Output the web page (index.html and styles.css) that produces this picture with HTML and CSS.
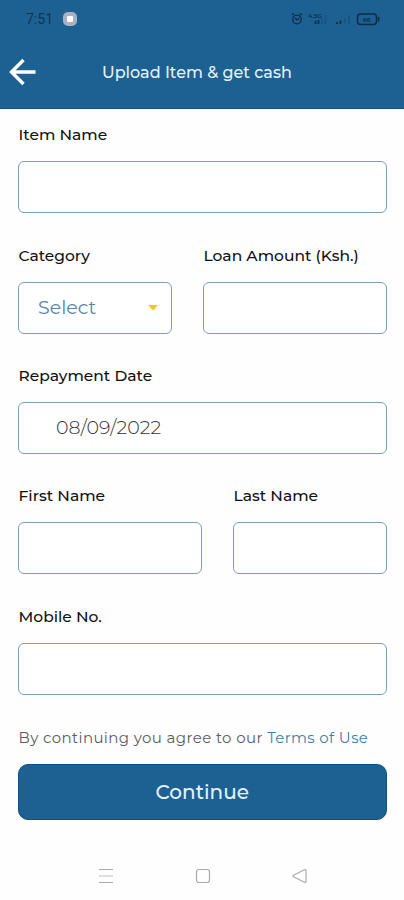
FILE: index.html
```html
<!DOCTYPE html>
<html lang="en">
<head>
    <meta charset="UTF-8">
    <meta name="viewport" content="width=device-width, initial-scale=1.0">
    <title>Upload Item</title>
    <link rel="stylesheet" href="styles.css">
</head>
<body>
    <header class="header">
        <div class="status-bar">
            <span class="time">7:51</span>
            <span class="app-badge"></span>
            <svg class="status-icons" width="90" height="14" viewBox="0 0 90 14" fill="none" stroke="#0b2c49">
                <!-- Alarm -->
                <circle cx="6" cy="7.5" r="4.3" stroke-width="1.3"/>
                <path d="M1 3l2-1.8M11 3L9 1.2M4 6l2 2 2.3-2" stroke-width="1.2"/>
                <!-- Signal -->
                <text x="17" y="6" class="network">4.5G</text>
                <path d="M24.5 12V9M27.5 12V8" stroke-width="1.8"/>
                <path d="M31 12V6M34.5 12V3" stroke="#17517d" stroke-width="1.5"/>
                <path d="M46 12v-2M49.5 12V8.5" stroke-width="1.8"/>
                <path d="M54 12V6M58 12V3" stroke="#17517d" stroke-width="1.5"/>
                <!-- Battery -->
                <rect x="66.5" y="2" width="19" height="10.5" rx="3" stroke-width="1.5"/>
                <path d="M87.5 5v4.5" stroke-width="1.6"/>
                <text x="72" y="9.6" class="battery">66</text>
            </svg>
        </div>
        <div class="title-bar">
            <a href="#" class="back" aria-label="Back">
                <svg width="28" height="28" viewBox="0 0 28 28" fill="none" stroke="#fff" stroke-width="3.4">
                    <path d="M27.5 14H3M15.5 2L3.5 14l12 12"/>
                </svg>
            </a>
            <h1>Upload Item &amp; get cash</h1>
        </div>
    </header>

    <form class="form" action="#" method="post">
        <div class="field">
            <label for="item_name">Item Name</label>
            <input type="text" id="item_name" name="item_name">
        </div>

        <div class="row row-category">
            <div class="field">
                <label for="category">Category</label>
                <button type="button" class="select" id="category">
                    <span>Select</span>
                    <svg width="10" height="6" viewBox="0 0 10 6"><path d="M0 0h10L5 5.5z" fill="#fcc419"/></svg>
                </button>
            </div>
            <div class="field">
                <label for="loan_amount">Loan Amount (Ksh.)</label>
                <input type="text" id="loan_amount" name="loan_amount">
            </div>
        </div>

        <div class="field">
            <label for="repayment_date">Repayment Date</label>
            <input type="text" class="date" id="repayment_date" name="repayment_date" value="08/09/2022">
        </div>

        <div class="row row-name">
            <div class="field">
                <label for="first_name">First Name</label>
                <input type="text" id="first_name" name="first_name">
            </div>
            <div class="field">
                <label for="last_name">Last Name</label>
                <input type="text" id="last_name" name="last_name">
            </div>
        </div>

        <div class="field">
            <label for="mobile">Mobile No.</label>
            <input type="tel" id="mobile" name="mobile">
        </div>

        <p class="terms">By continuing you agree to our <a href="#">Terms of Use</a></p>
        <button type="submit" class="continue">Continue</button>
    </form>

    <nav class="nav-bar">
        <svg width="16" height="16" viewBox="0 0 16 16" fill="none" stroke="#aaa" stroke-width="1.2">
            <path d="M1 1.5h14M1 14.5h14"/>
            <path d="M1 8h14" stroke="#c8c8c8"/>
        </svg>
        <svg width="16" height="16" viewBox="0 0 16 16" fill="none" stroke="#aaa" stroke-width="1.2">
            <rect x="1.5" y="1.5" width="13" height="13" rx="2.5"/>
        </svg>
        <svg width="16" height="16" viewBox="0 0 16 16" fill="none" stroke="#aaa" stroke-width="1.2" stroke-linejoin="round">
            <path d="M1.5 7.3L12.5 1.7q1.5-.6 1.5 1v10.6q0 1.6-1.5 1L1.5 8.7q-1-.7 0-1.4z"/>
        </svg>
    </nav>
</body>
</html>
```

FILE: styles.css
```css
body {
    font-family: Montserrat, Inter, sans-serif;
    display: flex;
    flex-direction: column;
    height: 900px;
    margin: 0;
    background-color: #fefefe;
    color: #111;
}
.header {
    height: 109px;
    box-sizing: border-box;
    background-color: #1d6192;
    border-bottom: 1px solid #0f5083;
}
.status-bar {
    display: flex;
    align-items: center;
    height: 37px;
    padding: 0 23px 0 26px;
}
.time {
    width: 37px;
    font-family: Roboto, sans-serif;
    font-size: 14px;
    color: #0d3557;
}
.app-badge {
    width: 6px;
    height: 6px;
    border: 4px solid #a9b1c3;
    border-radius: 5px;
    background-color: #fff;
}
.status-icons {
    margin-left: auto;
}
.network,
.battery {
    font-size: 6px;
    font-weight: 600;
    fill: #0b2c49;
    stroke: none;
}
.title-bar {
    display: flex;
    align-items: center;
    height: 70px;
    padding-left: 8px;
}
.back {
    display: flex;
    width: 94px;
}
.title-bar h1 {
    margin: 0;
    font-size: 16px;
    font-weight: 500;
    color: #e4f1fa;
}
.form {
    display: flex;
    flex-direction: column;
    gap: 32.4px;
    padding: 16.2px 17.5px 0 18px;
}
.field {
    display: flex;
    flex-direction: column;
    gap: 16px;
    min-width: 0;
}
.field label {
    font-size: 15.5px;
    font-weight: 500;
    line-height: 20px;
    padding-left: 0.5px;
    white-space: nowrap;
}
.field input,
.select {
    width: 100%;
    height: 52px;
    box-sizing: border-box;
    border: 1.5px solid #7c9fb9;
    border-radius: 6px;
    background-color: #fff;
    font-family: inherit;
    font-size: 19px;
    color: #333;
    outline: none;
}
.select {
    display: flex;
    align-items: center;
    justify-content: space-between;
    padding: 0 13px 0 19px;
    color: #5684a8;
}
.field .date {
    padding-left: 37px;
    font-weight: 300;
    letter-spacing: 0.1px;
}
.row {
    display: grid;
    column-gap: 31px;
}
.row-category {
    grid-template-columns: 154px 1fr;
}
.row-name {
    grid-template-columns: 184px 1fr;
}
.terms {
    margin: 0;
    padding: 1px 0 0 0.5px;
    font-size: 15px;
    line-height: 20px;
    letter-spacing: 0.38px;
    white-space: nowrap;
    color: #5c5c5c;
}
.terms a {
    color: #3f7fa8;
    text-decoration: none;
}
.continue {
    height: 56px;
    margin-top: -17px;
    border: 1px solid #0f5083;
    border-radius: 10px;
    background-color: #1d6192;
    color: #e4f1fa;
    font-family: inherit;
    font-size: 20px;
    font-weight: 500;
}
.nav-bar {
    display: flex;
    justify-content: space-between;
    margin-top: auto;
    padding: 0 96px 16px 98px;
}
```
